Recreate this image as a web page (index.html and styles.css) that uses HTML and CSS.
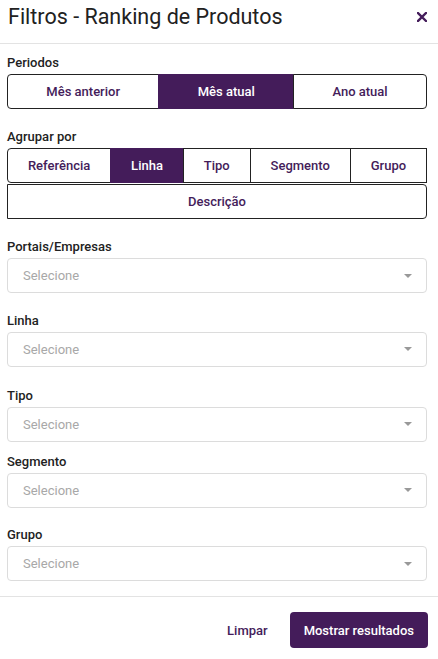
FILE: index.html
```html
<!DOCTYPE html>
<html lang="pt">
<head>
<meta charset="utf-8">
<title>Filtros - Ranking de Produtos</title>
<link rel="stylesheet" href="styles.css">
</head>
<body>
<div class="modal">
  <header class="header">
    <h1 class="title">Filtros - Ranking de Produtos</h1>
    <button class="close" aria-label="Fechar">
      <svg width="10" height="10" viewBox="0 0 10 10"><path d="M1 1L9 9M9 1L1 9" stroke="#441c5a" stroke-width="2.4" stroke-linecap="square"/></svg>
    </button>
  </header>
  <main class="content">
    <div class="field">
      <label class="label">Periodos</label>
      <div class="seg">
        <button class="seg-btn first">Mês anterior</button>
        <button class="seg-btn active">Mês atual</button>
        <button class="seg-btn last">Ano atual</button>
      </div>
    </div>
    <div class="field">
      <label class="label">Agrupar por</label>
      <div class="seg wrap">
        <button class="seg-btn first">Referência</button>
        <button class="seg-btn active">Linha</button>
        <button class="seg-btn">Tipo</button>
        <button class="seg-btn">Segmento</button>
        <button class="seg-btn">Grupo</button>
        <button class="seg-btn full last">Descrição</button>
      </div>
    </div>
    <div class="field">
      <label class="label">Portais/Empresas</label>
      <div class="select"><span class="placeholder">Selecione</span><span class="caret"></span></div>
    </div>
    <div class="field tight">
      <label class="label">Linha</label>
      <div class="select"><span class="placeholder">Selecione</span><span class="caret"></span></div>
    </div>
    <div class="field loose">
      <label class="label">Tipo</label>
      <div class="select"><span class="placeholder">Selecione</span><span class="caret"></span></div>
    </div>
    <div class="field short">
      <label class="label">Segmento</label>
      <div class="select"><span class="placeholder">Selecione</span><span class="caret"></span></div>
    </div>
    <div class="field tight">
      <label class="label">Grupo</label>
      <div class="select"><span class="placeholder">Selecione</span><span class="caret"></span></div>
    </div>
  </main>
  <footer class="footer">
    <button class="btn-link">Limpar</button>
    <button class="btn-primary">Mostrar resultados</button>
  </footer>
</div>
</body>
</html>
```
FILE: styles.css
```css
* { box-sizing: border-box; }
html, body { margin: 0; padding: 0; background: #fff; }
body {
  font-family: Roboto, "Liberation Sans", Arial, sans-serif;
  color: #222;
  width: 438px;
}
button { font-family: inherit; cursor: pointer; }

.header {
  height: 44px;
  border-bottom: 1px solid #e3e3e3;
  display: flex;
  justify-content: space-between;
  align-items: flex-start;
  padding: 4px 11px 0 8px;
}
.title {
  margin: 0;
  font-size: 21.5px;
  font-weight: 400;
  line-height: normal;
  color: #212121;
}
.close {
  border: 0;
  background: none;
  padding: 0;
  width: 10px;
  height: 10px;
  margin-top: 8px;
  display: flex;
}

.content {
  padding: 9px 11px 15px 7px;
}
.field { margin-top: 18px; }
.field:first-child { margin-top: 0; }
.field.tight { margin-top: 17.5px; }
.field.loose { margin-top: 19px; }
.field.short { margin-top: 10px; }

.label {
  display: block;
  font-size: 13px;
  font-weight: 500;
  line-height: 20px;
  margin-bottom: 1px;
  color: #222;
}

.seg {
  display: flex;
}
.seg.wrap { flex-wrap: wrap; }
.seg-btn {
  flex: 1 1 auto;
  height: 35px;
  border: 1px solid #222;
  background: #fff;
  color: #441c5a;
  font-size: 13px;
  font-weight: 500;
  padding: 0 12px;
  margin: 0 0 0 -1px;
  border-radius: 0;
}
.seg-btn:first-child { margin-left: 0; }
.seg-btn.first { border-radius: 4px 0 0 4px; }
.seg-btn.last { border-radius: 0 4px 4px 0; }
.seg-btn.full { flex-basis: 100%; margin-left: 0; margin-top: 1px; }
.seg-btn.active {
  background: #441c5a;
  border-color: #441c5a;
  color: #fff;
  font-weight: 500;
}

.select {
  height: 35px;
  border: 1px solid #dcdcdc;
  border-radius: 4px;
  display: flex;
  align-items: center;
  justify-content: space-between;
  padding: 0 14px 0 15px;
}
.placeholder {
  font-size: 13px;
  color: #a8a8a8;
}
.caret {
  width: 0;
  height: 0;
  border-left: 4px solid transparent;
  border-right: 4px solid transparent;
  border-top: 4px solid #999;
}

.footer {
  border-top: 1px solid #e3e3e3;
  display: flex;
  justify-content: flex-end;
  align-items: center;
  gap: 10px;
  padding: 15px 10px 12px 7px;
}
.btn-link {
  border: 0;
  background: none;
  color: #441c5a;
  font-size: 13px;
  font-weight: 500;
  padding: 0 12px;
  height: 36px;
}
.btn-primary {
  border: 0;
  background: #441c5a;
  color: #fff;
  font-size: 13px;
  font-weight: 500;
  height: 36px;
  padding: 0 14px;
  border-radius: 4px;
}
```
